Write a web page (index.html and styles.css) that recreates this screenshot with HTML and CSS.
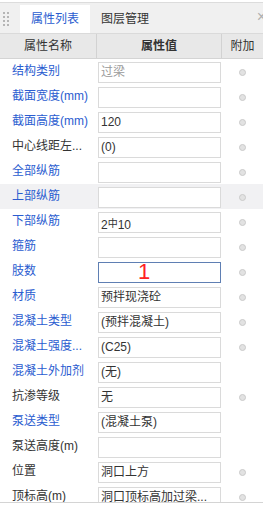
FILE: index.html
```html
<!DOCTYPE html>
<html lang="zh-CN">
<head>
  <meta charset="UTF-8" />
  <title>属性列表</title>
  <link rel="stylesheet" href="styles.css">
</head>
<body>
  <div class="panel">
    <div class="tabs">
      <span class="grip">
        <svg width="8" height="16" viewBox="0 0 8 16">
          <g fill="#b5b5b5">
            <rect x="1" y="1" width="2" height="2"/><rect x="5" y="1" width="2" height="2"/>
            <rect x="1" y="5" width="2" height="2"/><rect x="5" y="5" width="2" height="2"/>
            <rect x="1" y="9" width="2" height="2"/><rect x="5" y="9" width="2" height="2"/>
            <rect x="1" y="13" width="2" height="2"/><rect x="5" y="13" width="2" height="2"/>
          </g>
        </svg>
      </span>
      <span class="tab active">属性列表</span>
      <span class="tab">图层管理</span>
      <span class="close">×</span>
    </div>

    <div class="head">
      <div class="hcell">属性名称</div>
      <div class="hcell bold">属性值</div>
      <div class="hcell">附加</div>
    </div>

    <div class="rows">
      <div class="row"><div class="name blue">结构类别</div><div class="val"><div class="box grey">过梁</div></div><div class="extra"><i class="dot"></i></div></div>
      <div class="row"><div class="name blue">截面宽度(mm)</div><div class="val"><div class="box"></div></div><div class="extra"><i class="dot"></i></div></div>
      <div class="row"><div class="name blue">截面高度(mm)</div><div class="val"><div class="box">120</div></div><div class="extra"><i class="dot"></i></div></div>
      <div class="row"><div class="name">中心线距左...</div><div class="val"><div class="box">(0)</div></div><div class="extra"><i class="dot"></i></div></div>
      <div class="row"><div class="name blue">全部纵筋</div><div class="val"><div class="box"></div></div><div class="extra"><i class="dot"></i></div></div>
      <div class="row hover"><div class="name blue">上部纵筋</div><div class="val"><div class="box"></div></div><div class="extra"><i class="dot"></i></div></div>
      <div class="row"><div class="name blue">下部纵筋</div><div class="val"><div class="box">2<span class="steel">中</span>10</div></div><div class="extra"><i class="dot"></i></div></div>
      <div class="row"><div class="name blue">箍筋</div><div class="val"><div class="box"></div></div><div class="extra"><i class="dot"></i></div></div>
      <div class="row"><div class="name blue">肢数</div><div class="val"><div class="box focus"></div><span class="mark">1</span></div><div class="extra"><i class="dot"></i></div></div>
      <div class="row"><div class="name blue">材质</div><div class="val"><div class="box">预拌现浇砼</div></div><div class="extra"><i class="dot"></i></div></div>
      <div class="row"><div class="name blue">混凝土类型</div><div class="val"><div class="box">(预拌混凝土)</div></div><div class="extra"><i class="dot"></i></div></div>
      <div class="row"><div class="name blue">混凝土强度...</div><div class="val"><div class="box">(C25)</div></div><div class="extra"><i class="dot"></i></div></div>
      <div class="row"><div class="name blue">混凝土外加剂</div><div class="val"><div class="box">(无)</div></div><div class="extra"></div></div>
      <div class="row"><div class="name">抗渗等级</div><div class="val"><div class="box">无</div></div><div class="extra"><i class="dot"></i></div></div>
      <div class="row"><div class="name blue">泵送类型</div><div class="val"><div class="box">(混凝土泵)</div></div><div class="extra"></div></div>
      <div class="row"><div class="name">泵送高度(m)</div><div class="val"><div class="box"></div></div><div class="extra"></div></div>
      <div class="row"><div class="name">位置</div><div class="val"><div class="box">洞口上方</div></div><div class="extra"><i class="dot"></i></div></div>
      <div class="row"><div class="name">顶标高(m)</div><div class="val"><div class="box">洞口顶标高加过梁...</div></div><div class="extra"><i class="dot"></i></div></div>
    </div>
  </div>
</body>
</html>
```

FILE: styles.css
```css
body {
  margin: 0;
  background: #fff;
  font-family: "Liberation Sans", "Noto Sans CJK SC", sans-serif;
  font-size: 12px;
  color: #333;
}
.panel {
  margin-top: 2px;
  border-top: 1px solid #dcdcdc;
  width: 263px;
  overflow: hidden;
}
.tabs {
  display: flex;
  align-items: flex-end;
  height: 30px;
  background: #f0f0f0;
  position: relative;
}
.grip {
  width: 20px;
  height: 28px;
  display: flex;
  align-items: center;
  padding-left: 2px;
  box-sizing: border-box;
}
.tab {
  height: 28px;
  line-height: 28px;
  padding: 0 11px;
  color: #333;
}
.tab.active {
  background: #fff;
  color: #2a5cd0;
}
.close {
  position: absolute;
  right: -3px;
  top: 5px;
  color: #b0b0b0;
  font-size: 16px;
}
.head {
  display: grid;
  grid-template-columns: 97px 125px 41px;
  height: 24px;
  background: #e8e8e8;
  border-top: 1px solid #dadada;
  border-bottom: 1px solid #d4d4d4;
}
.hcell {
  text-align: center;
  line-height: 24px;
  border-right: 1px solid #d2d2d2;
}
.hcell:last-child {
  border-right: none;
}
.hcell.bold {
  font-weight: bold;
}
.rows {
  height: 443px;
  overflow: hidden;
  border-bottom: 1px solid #d4d4d4;
}
.row {
  display: grid;
  grid-template-columns: 97px 125px 41px;
  height: 25px;
}
.row.hover {
  background: #f1f1f3;
}
.name {
  padding-left: 12px;
  line-height: 24px;
  white-space: nowrap;
  overflow: hidden;
}
.name.blue {
  color: #2a5cd0;
}
.val {
  position: relative;
  padding: 3px 1px 0 1px;
}
.box {
  height: 21px;
  box-sizing: border-box;
  border: 1px solid #dadada;
  background: #fff;
  padding-left: 2px;
  line-height: 19px;
  white-space: nowrap;
  overflow: hidden;
}
.box.grey {
  color: #9a9a9a;
}
.box.focus {
  border-color: #5f7fb3;
}
.steel {
  font-family: "Noto Sans CJK SC", sans-serif;
  font-size: 10px;
  vertical-align: 2px;
}
.mark {
  position: absolute;
  left: 41px;
  top: 0;
  color: #f22;
  font-family: "Liberation Sans", sans-serif;
  font-size: 22px;
  line-height: 26px;
}
.extra {
  display: flex;
  align-items: center;
  justify-content: center;
}
.dot {
  width: 7px;
  height: 7px;
  box-sizing: border-box;
  border-radius: 50%;
  border: 1px solid #cacaca;
  background: #e2e2e2;
  margin-top: 2px;
}
```
